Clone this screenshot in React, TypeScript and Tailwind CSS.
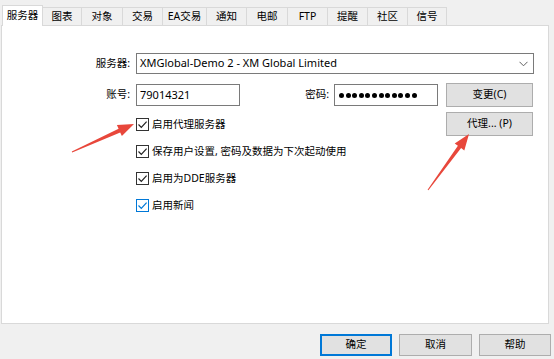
import React from 'react';

const tabs = [
  { label: '图表', w: 'w-[39px]' },
  { label: '对象', w: 'w-[41px]' },
  { label: '交易', w: 'w-[40px]' },
  { label: 'EA交易', w: 'w-[44px]' },
  { label: '通知', w: 'w-[40px]' },
  { label: '电邮', w: 'w-[41px]' },
  { label: 'FTP', w: 'w-[40px]' },
  { label: '提醒', w: 'w-[40px]' },
  { label: '社区', w: 'w-[40px]' },
  { label: '信号', w: 'w-[39px]' },
];

function CheckBox({ label, focused }: { label: string; focused?: boolean }) {
  return (
    <div className="flex items-center h-[27px]">
      <div
        className={`w-[13px] h-[13px] bg-white border flex items-center justify-center ${
          focused ? 'border-[#0078d7]' : 'border-[#333333]'
        }`}
      >
        <svg width="11" height="11" viewBox="0 0 11 11">
          <path
            d="M1.5 5.5 L4.3 8.3 L9.6 2.6"
            fill="none"
            stroke={focused ? '#0078d7' : '#222222'}
            strokeWidth="1.2"
          />
        </svg>
      </div>
      <span className="ml-[1px] pl-[2px]">{label}</span>
    </div>
  );
}

function WinButton({ label, def, className = '' }: { label: string; def?: boolean; className?: string }) {
  return (
    <div
      className={`flex items-center justify-center bg-[#e1e1e1] border ${
        def ? 'border-[#0078d7] shadow-[inset_0_0_0_1px_#0078d7]' : 'border-[#adadad]'
      } ${className}`}
    >
      {label}
    </div>
  );
}

export default function App() {
  return (
    <div
      className="relative w-[554px] h-[359px] bg-[#f0f0f0] text-[10.5px] text-black flex flex-col overflow-hidden"
      style={{ fontFamily: '"Noto Sans", "Noto Sans CJK SC", sans-serif' }}
    >
      {/* Tab strip */}
      <div className="flex items-end h-[25px] pl-[2px] pt-[4px]">
        <div className="w-[41px] h-[21px] bg-white border border-b-0 border-[#d9d9d9] flex items-center justify-center relative z-10 -mb-[1px] pb-[1px]">
          服务器
        </div>
        {tabs.map((t) => (
          <div
            key={t.label}
            className={`${t.w} h-[18px] bg-[#f0f0f0] border border-b-0 border-l-0 border-[#d9d9d9] flex items-center justify-center`}
          >
            {t.label}
          </div>
        ))}
      </div>

      {/* Panel */}
      <div className="ml-[1px] w-[548px] h-[299px] bg-white border border-[#d9d9d9] pt-[27px]">
        <div className="flex items-center h-[21px]">
          <span className="w-[134px] text-right pr-[6px]">服务器:</span>
          <div className="w-[398px] h-[21px] border border-[#7a7a7a] flex items-center justify-between pl-[3px] pr-[5px] text-[11px]">
            <span>XMGlobal-Demo 2 - XM Global Limited</span>
            <svg width="9" height="6" viewBox="0 0 9 6">
              <path d="M0.5 0.8 L4.5 4.8 L8.5 0.8" fill="none" stroke="#606060" strokeWidth="1" />
            </svg>
          </div>
        </div>

        <div className="flex items-center h-[24px] mt-[9px]">
          <span className="w-[134px] text-right pr-[6px]">账号:</span>
          <div className="w-[104px] h-[22px] border border-[#7a7a7a] flex items-center pl-[3px] text-[11px]">79014321</div>
          <span className="w-[94px] text-right pr-[5px]">密码:</span>
          <div className="w-[104px] h-[22px] border border-[#7a7a7a] flex items-center gap-[1.6px] pl-[4px]">
            {Array.from({ length: 12 }).map((_, i) => (
              <div key={i} className="w-[5px] h-[5px] rounded-full bg-black" />
            ))}
          </div>
          <WinButton label="变更(C)" className="ml-[8px] w-[87px] h-[24px]" />
        </div>

        <div className="flex mt-[5px]">
          <div className="ml-[134px] w-[310px] flex flex-col mt-[-1px]">
            <CheckBox label="启用代理服务器" />
            <CheckBox label="保存用户设置, 密码及数据为下次起动使用" />
            <CheckBox label="启用为DDE服务器" />
            <CheckBox label="启用新闻" focused />
          </div>
          <WinButton label="代理... (P)" className="w-[87px] h-[24px]" />
        </div>
      </div>

      {/* Footer buttons */}
      <div className="flex justify-end gap-[7px] pr-[3px] mt-[10px]">
        <WinButton label="确定" def className="w-[72px] h-[22px]" />
        <WinButton label="取消" className="w-[73px] h-[22px]" />
        <WinButton label="帮助" className="w-[72px] h-[22px]" />
      </div>

      {/* Annotation arrows */}
      <svg className="absolute left-0 top-0 pointer-events-none" width="554" height="359">
        <polygon
          fill="#e8473b"
          points="72.2,152.5 120.2,132.4 121.9,136.1 134,124 116.9,125.1 118.6,128.8 71.8,151.5"
        />
        <polygon
          fill="#e8473b"
          points="428.4,190.3 461.1,148.1 464.3,150.5 469,134 454.7,143.4 457.9,145.7 427.6,189.7"
        />
      </svg>
    </div>
  );
}
